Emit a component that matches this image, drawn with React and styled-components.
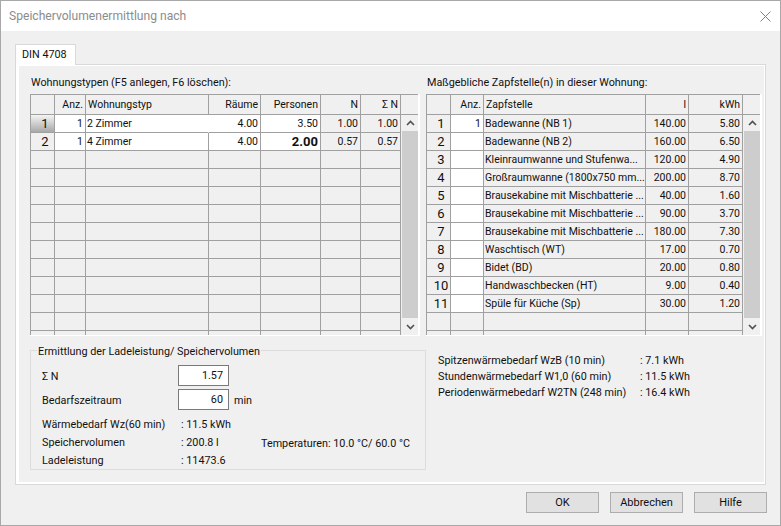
import React from 'react';
import styled, { createGlobalStyle } from 'styled-components';

const line = '#a0a0a0';
const face = '#f0f0f0';
const sans = 'Roboto, "Liberation Sans", Arial, sans-serif';
const textSize = '10.8px';
const cellSize = '10.5px';

const GlobalStyle = createGlobalStyle`
  html, body {
    margin: 0;
    padding: 0;
    background: ${face};
  }
`;

const Dialog = styled.div`
  box-sizing: border-box;
  display: flex;
  flex-direction: column;
  width: 781px;
  height: 526px;
  border: 1px solid #a8a8a8;
  background: ${face};
  color: #101010;
  font-family: ${sans};
  font-size: ${textSize};
  overflow: hidden;
`;

const TitleBar = styled.div`
  flex: none;
  display: flex;
  align-items: center;
  justify-content: space-between;
  height: 30px;
  padding: 0 9px 0 8px;
  background: #fff;
  color: #8c8c8c;
  font-size: 12.1px;
`;

const Body = styled.div`
  flex: none;
  padding: 13px 14px 0;
`;

const Tab = styled.div`
  position: relative;
  z-index: 1;
  box-sizing: border-box;
  width: 61px;
  height: 21px;
  margin-bottom: -1px;
  padding: 3px 0 0 6px;
  background: #fff;
  border: 1px solid #d9d9d9;
  border-bottom: none;
`;

const TabPanel = styled.div`
  border: 1px solid #d9d9d9;
  background: #fff;
`;

const TabInner = styled.div`
  box-sizing: border-box;
  height: 416px;
  margin: 1px 1px 2px 3px;
  padding: 0 0 0 11px;
  background: ${face};
`;

const Columns = styled.div`
  display: flex;
  gap: 6px;
`;

const GridColumn = styled.div`
  display: flex;
  flex-direction: column;
`;

const GridTitle = styled.div`
  height: 28px;
  padding: 10px 0 0 1px;
  box-sizing: border-box;
  line-height: 14px;
`;

const GridFrame = styled.div`
  display: flex;
  height: 241px;
  overflow: hidden;
  border-right: 2px solid #fff;
  border-bottom: 1px solid #fff;
`;

const GridBody = styled.div`
  border-left: 1px solid ${line};
  border-top: 1px solid ${line};
`;

const Row = styled.div`
  display: grid;
  grid-template-columns: ${(p) => p.$cols};
  height: ${(p) => (p.$head ? '20px' : '18px')};
`;

const Cell = styled.div`
  position: relative;
  box-sizing: border-box;
  padding: 0 ${(p) => (p.$right ? '2px' : '0')} 0 ${(p) => (p.$head ? '2px' : '1px')};
  border-right: 1px solid ${(p) => (p.$focus ? '#fff' : line)};
  border-bottom: 1px solid ${line};
  background: ${(p) => (p.$white ? '#fff' : face)};
  box-shadow: ${(p) => (p.$focus ? `1px 0 0 ${line}` : 'none')};
  font-weight: ${(p) => (p.$bold ? 'bold' : 'normal')};
  font-size: ${(p) => (p.$bold ? '13px' : cellSize)};
  line-height: ${(p) => (p.$head ? '20px' : '17px')};
  text-align: ${(p) => (p.$right ? 'right' : 'left')};
  white-space: nowrap;
  overflow: hidden;
`;

const RowNumber = styled(Cell)`
  padding: 0 0 0 5px;
  font-size: 13px;
  line-height: 18px;
  text-align: center;
  background: ${(p) => (p.$active ? 'linear-gradient(#f4f4f4, #a8a8a8)' : face)};
`;

const ScrollBar = styled.div`
  flex: none;
  display: flex;
  flex-direction: column;
  width: 17px;
  background: ${face};
`;

const ScrollCorner = styled.div`
  flex: none;
  height: 19px;
  border-top: 1px solid ${line};
  border-bottom: 1px solid ${line};
`;

const ScrollButton = styled.div`
  flex: none;
  display: flex;
  align-items: center;
  justify-content: center;
  height: ${(p) => p.$h}px;
  padding-left: 1px;
`;

const ScrollThumb = styled.div`
  flex: 1;
  margin-left: 1px;
  background: #cdcdcd;
`;

const Lower = styled.div`
  display: flex;
  margin-top: 5px;
`;

const Group = styled.fieldset`
  box-sizing: border-box;
  width: 396px;
  min-width: 0;
  height: 129px;
  margin: 0;
  padding: 6px 0 0 11px;
  border: 1px solid #dcdcdc;
`;

const GroupTitle = styled.legend`
  margin-left: -5px;
  padding: 4px 1px 0;
  line-height: 14px;
`;

const InputRow = styled.div`
  display: flex;
  align-items: center;
  height: 21px;
  margin-bottom: 3px;
`;

const InputLabel = styled.div`
  width: 136px;
  padding-top: 2px;
`;

const NumberInput = styled.input`
  box-sizing: border-box;
  width: 51px;
  height: 21px;
  padding: 0 5px 1px 0;
  border: 1px solid #7a7a7a;
  background: #fff;
  color: #101010;
  font: ${textSize} ${sans};
  text-align: right;
`;

const Unit = styled.div`
  margin-left: 5px;
  padding-top: 2px;
`;

const Results = styled.div`
  display: grid;
  grid-template-columns: 139px 80px auto;
  grid-auto-rows: 18px;
  margin-top: 6px;
  line-height: 18px;
  white-space: nowrap;
`;

const Temperatures = styled.div`
  padding-top: 1px;
`;

const Summary = styled.div`
  display: grid;
  grid-template-columns: 202px auto;
  grid-auto-rows: 16px;
  align-content: start;
  margin-left: 12px;
  padding-top: 12px;
  line-height: 16px;
  white-space: nowrap;
`;

const Footer = styled.div`
  flex: none;
  display: flex;
  justify-content: flex-end;
  gap: 11px;
  margin-top: 7px;
  padding-right: 13px;
`;

const Button = styled.button`
  box-sizing: border-box;
  width: 73px;
  height: 21px;
  padding: 0;
  border: 1px solid #adadad;
  background: #e1e1e1;
  color: #101010;
  font: 11px ${sans};
`;

const Chevron = ({ down }) => (
  <svg width="9" height="6" viewBox="0 0 9 6">
    <path
      d={down ? 'M1 1l3.5 3.5L8 1' : 'M1 5l3.5-3.5L8 5'}
      fill="none"
      stroke="#505050"
      strokeWidth="1.6"
    />
  </svg>
);

const CloseIcon = () => (
  <svg width="11" height="11" viewBox="0 0 11 11">
    <path d="M0.5 0.5l10 10M10.5 0.5l-10 10" stroke="#808080" strokeWidth="1" fill="none" />
  </svg>
);

const typeCols = '24px 31px 123px 52px 60px 40px 40px';
const tapCols = '24px 33px 162px 43px 54px';

const typeRows = [
  ['1', '2 Zimmer', '4.00', '3.50', '1.00', '1.00'],
  ['1', '4 Zimmer', '4.00', '2.00', '0.57', '0.57'],
];

const tapRows = [
  ['1', 'Badewanne (NB 1)', '140.00', '5.80'],
  ['', 'Badewanne (NB 2)', '160.00', '6.50'],
  ['', 'Kleinraumwanne und Stufenwa...', '120.00', '4.90'],
  ['', 'Großraumwanne (1800x750 mm...', '200.00', '8.70'],
  ['', 'Brausekabine mit Mischbatterie ...', '40.00', '1.60'],
  ['', 'Brausekabine mit Mischbatterie ...', '90.00', '3.70'],
  ['', 'Brausekabine mit Mischbatterie ...', '180.00', '7.30'],
  ['', 'Waschtisch (WT)', '17.00', '0.70'],
  ['', 'Bidet (BD)', '20.00', '0.80'],
  ['', 'Handwaschbecken (HT)', '9.00', '0.40'],
  ['', 'Spüle für Küche (Sp)', '30.00', '1.20'],
];

function Scroller() {
  return (
    <ScrollBar>
      <ScrollCorner />
      <ScrollButton $h={16}><Chevron /></ScrollButton>
      <ScrollThumb />
      <ScrollButton $h={17}><Chevron down /></ScrollButton>
    </ScrollBar>
  );
}

function TypeGrid() {
  const empty = [...Array(11).keys()];
  return (
    <GridFrame>
      <GridBody>
        <Row $cols={typeCols} $head>
          <Cell $head />
          <Cell $head $right>Anz.</Cell>
          <Cell $head>Wohnungstyp</Cell>
          <Cell $head $right>Räume</Cell>
          <Cell $head $right>Personen</Cell>
          <Cell $head $right>N</Cell>
          <Cell $head $right>Σ N</Cell>
        </Row>
        {typeRows.map((row, i) => (
          <Row $cols={typeCols} key={i}>
            <RowNumber $active={i === 0}>{i + 1}</RowNumber>
            <Cell $white $right>{row[0]}</Cell>
            <Cell $white $focus={i === 0}>{row[1]}</Cell>
            <Cell $white $right>{row[2]}</Cell>
            <Cell $white $right $bold={i === 1}>{row[3]}</Cell>
            <Cell $right>{row[4]}</Cell>
            <Cell $right>{row[5]}</Cell>
          </Row>
        ))}
        {empty.map((key) => (
          <Row $cols={typeCols} key={key}>
            <Cell /><Cell /><Cell /><Cell /><Cell /><Cell /><Cell />
          </Row>
        ))}
      </GridBody>
      <Scroller />
    </GridFrame>
  );
}

function TapGrid() {
  return (
    <GridFrame>
      <GridBody>
        <Row $cols={tapCols} $head>
          <Cell $head />
          <Cell $head $right>Anz.</Cell>
          <Cell $head>Zapfstelle</Cell>
          <Cell $head $right>l</Cell>
          <Cell $head $right>kWh</Cell>
        </Row>
        {tapRows.map((row, i) => (
          <Row $cols={tapCols} key={i}>
            <RowNumber>{i + 1}</RowNumber>
            <Cell $white $right>{row[0]}</Cell>
            <Cell>{row[1]}</Cell>
            <Cell $right>{row[2]}</Cell>
            <Cell $right>{row[3]}</Cell>
          </Row>
        ))}
        {[0, 1].map((key) => (
          <Row $cols={tapCols} key={key}>
            <Cell /><Cell /><Cell /><Cell /><Cell />
          </Row>
        ))}
      </GridBody>
      <Scroller />
    </GridFrame>
  );
}

export default function App() {
  return (
    <Dialog>
      <GlobalStyle />
      <TitleBar>
        Speichervolumenermittlung nach
        <CloseIcon />
      </TitleBar>
      <Body>
        <Tab>DIN 4708</Tab>
        <TabPanel>
          <TabInner>
            <Columns>
              <GridColumn>
                <GridTitle>Wohnungstypen (F5 anlegen, F6 löschen):</GridTitle>
                <TypeGrid />
              </GridColumn>
              <GridColumn>
                <GridTitle>Maßgebliche Zapfstelle(n) in dieser Wohnung:</GridTitle>
                <TapGrid />
              </GridColumn>
            </Columns>
            <Lower>
              <Group>
                <GroupTitle>Ermittlung der Ladeleistung/ Speichervolumen</GroupTitle>
                <InputRow>
                  <InputLabel>Σ N</InputLabel>
                  <NumberInput readOnly value="1.57" />
                </InputRow>
                <InputRow>
                  <InputLabel>Bedarfszeitraum</InputLabel>
                  <NumberInput readOnly value="60" />
                  <Unit>min</Unit>
                </InputRow>
                <Results>
                  <div>Wärmebedarf Wz(60 min)</div>
                  <div>: 11.5 kWh</div>
                  <div />
                  <div>Speichervolumen</div>
                  <div>: 200.8 l</div>
                  <Temperatures>Temperaturen: 10.0 °C/ 60.0 °C</Temperatures>
                  <div>Ladeleistung</div>
                  <div>: 11473.6</div>
                </Results>
              </Group>
              <Summary>
                <div>Spitzenwärmebedarf WzB (10 min)</div>
                <div>: 7.1 kWh</div>
                <div>Stundenwärmebedarf W1,0 (60 min)</div>
                <div>: 11.5 kWh</div>
                <div>Periodenwärmebedarf W2TN (248 min)</div>
                <div>: 16.4 kWh</div>
              </Summary>
            </Lower>
          </TabInner>
        </TabPanel>
      </Body>
      <Footer>
        <Button>OK</Button>
        <Button>Abbrechen</Button>
        <Button>Hilfe</Button>
      </Footer>
    </Dialog>
  );
}
